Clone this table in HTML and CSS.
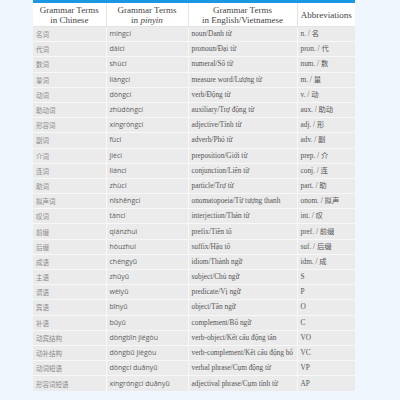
FILE: index.html
```html
<!DOCTYPE html>
<html>
<head>
<meta charset="utf-8">
<link rel="stylesheet" href="styles.css">
</head>
<body>
<div class="wrap">
<table class="terms">
<colgroup><col class="c1"><col class="c2"><col class="c3"><col class="c4"></colgroup>
<thead>
<tr><th>Grammar Terms<br>in Chinese</th><th>Grammar Terms<br>in <i>pinyin</i></th><th>Grammar Terms<br>in English/Vietnamese</th><th>Abbreviations</th></tr>
</thead>
<tbody>
<tr><td class="zh">名词</td><td class="py">míngcí</td><td class="en">noun/Danh từ</td><td class="ab">n. / 名</td></tr>
<tr><td class="zh">代词</td><td class="py">dàicí</td><td class="en">pronoun/Đại từ</td><td class="ab">pron. / 代</td></tr>
<tr><td class="zh">数词</td><td class="py">shùcí</td><td class="en">numeral/Số từ</td><td class="ab">num. / 数</td></tr>
<tr><td class="zh">量词</td><td class="py">liàngcí</td><td class="en">measure word/Lượng từ</td><td class="ab">m. / 量</td></tr>
<tr><td class="zh">动词</td><td class="py">dòngcí</td><td class="en">verb/Động từ</td><td class="ab">v. / 动</td></tr>
<tr><td class="zh">助动词</td><td class="py">zhùdòngcí</td><td class="en">auxiliary/Trợ động từ</td><td class="ab">aux. / 助动</td></tr>
<tr><td class="zh">形容词</td><td class="py">xíngróngcí</td><td class="en">adjective/Tính từ</td><td class="ab">adj. / 形</td></tr>
<tr><td class="zh">副词</td><td class="py">fùcí</td><td class="en">adverb/Phó từ</td><td class="ab">adv. / 副</td></tr>
<tr><td class="zh">介词</td><td class="py">jiècí</td><td class="en">preposition/Giới từ</td><td class="ab">prep. / 介</td></tr>
<tr><td class="zh">连词</td><td class="py">liáncí</td><td class="en">conjunction/Liên từ</td><td class="ab">conj. / 连</td></tr>
<tr><td class="zh">助词</td><td class="py">zhùcí</td><td class="en">particle/Trợ từ</td><td class="ab">part. / 助</td></tr>
<tr><td class="zh">拟声词</td><td class="py">nǐshēngcí</td><td class="en">onomatopoeia/Từ tượng thanh</td><td class="ab">onom. / 拟声</td></tr>
<tr><td class="zh">叹词</td><td class="py">tàncí</td><td class="en">interjection/Thán từ</td><td class="ab">int. / 叹</td></tr>
<tr><td class="zh">前缀</td><td class="py">qiánzhuì</td><td class="en">prefix/Tiền tố</td><td class="ab">pref. / 前缀</td></tr>
<tr><td class="zh">后缀</td><td class="py">hòuzhuì</td><td class="en">suffix/Hậu tố</td><td class="ab">suf. / 后缀</td></tr>
<tr><td class="zh">成语</td><td class="py">chéngyǔ</td><td class="en">idiom/Thành ngữ</td><td class="ab">idm. / 成</td></tr>
<tr><td class="zh">主语</td><td class="py">zhǔyǔ</td><td class="en">subject/Chủ ngữ</td><td class="ab">S</td></tr>
<tr><td class="zh">谓语</td><td class="py">wèiyǔ</td><td class="en">predicate/Vị ngữ</td><td class="ab">P</td></tr>
<tr><td class="zh">宾语</td><td class="py">bīnyǔ</td><td class="en">object/Tân ngữ</td><td class="ab">O</td></tr>
<tr><td class="zh">补语</td><td class="py">bǔyǔ</td><td class="en">complement/Bổ ngữ</td><td class="ab">C</td></tr>
<tr><td class="zh">动宾结构</td><td class="py">dòngbīn jiégòu</td><td class="en">verb-object/Kết cấu động tân</td><td class="ab">VO</td></tr>
<tr><td class="zh">动补结构</td><td class="py">dòngbǔ jiégòu</td><td class="en">verb-complement/Kết cấu động bổ</td><td class="ab">VC</td></tr>
<tr><td class="zh">动词短语</td><td class="py">dòngcí duǎnyǔ</td><td class="en">verbal phrase/Cụm động từ</td><td class="ab">VP</td></tr>
<tr><td class="zh">形容词短语</td><td class="py">xíngróngcí duǎnyǔ</td><td class="en">adjectival phrase/Cụm tính từ</td><td class="ab">AP</td></tr>
</tbody>
</table>
</div>
</body>
</html>
```
FILE: styles.css
```css
html, body {
  margin: 0;
  padding: 0;
  background: #eff6fd;
}
.wrap {
  padding-left: 33px;
}
.terms {
  width: 322px;
  border-collapse: collapse;
  table-layout: fixed;
  border-top: 3px solid #1c98e3;
  font-family: "Liberation Serif", "DejaVu Serif", serif;
  color: #555;
}
.c1 { width: 73px; }
.c2 { width: 82px; }
.c3 { width: 109px; }
.c4 { width: 58px; }
.terms th {
  background: #fff;
  font-weight: normal;
  font-size: 9px;
  line-height: 10px;
  height: 25px;
  padding: 0 2px;
  box-sizing: border-box;
  color: #444;
  border-left: 1px solid #e4e4e4;
  border-bottom: 1px solid #e4e4e4;
  text-align: center;
  vertical-align: middle;
}
.terms th:first-child { border-left: none; }
.terms td {
  background: #ebebeb;
  height: 15.2px;
  padding: 0 0 0 3px;
  box-sizing: border-box;
  border: 1px solid #f8f8f8;
  border-top: none;
  font-size: 7.3px;
  line-height: 8px;
  white-space: nowrap;
  overflow: hidden;
  vertical-align: middle;
}
.terms td:first-child { border-left: none; }
.terms td:last-child { border-right: none; }
.terms tr:last-child td { border-bottom: none; }
.terms td.zh {
  font-family: "Noto Sans CJK SC", sans-serif;
  font-size: 6.5px;
  color: #8a8a8a;
}
.terms td.py {
  font-family: "Open Sans", sans-serif;
  font-size: 7px;
  color: #5e5e5e;
}
.en, .ab {
  font-family: "Liberation Serif", "DejaVu Serif", "Noto Sans CJK SC", serif;
  color: #555;
}
```
